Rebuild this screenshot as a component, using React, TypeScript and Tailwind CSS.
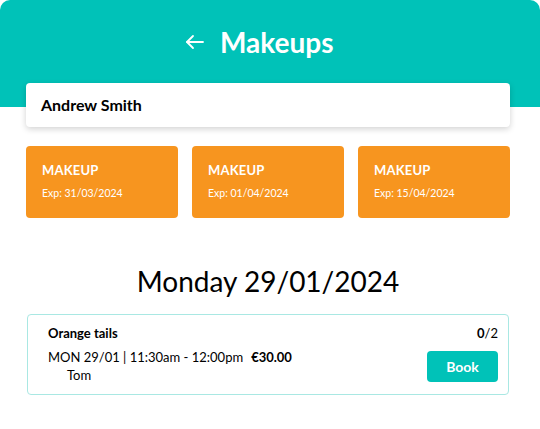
import React from "react";

const font = { fontFamily: "Lato, 'Noto Sans', sans-serif" };

function Voucher({ exp }: { exp: string }) {
  return (
    <div className="h-[72px] rounded-[4px] bg-[#f7951f] pl-[16px] pt-[15px] text-white">
      <div className="text-[13px] font-bold leading-[18px] tracking-[0.2px]">MAKEUP</div>
      <div className="mt-[7px] text-[10.5px] leading-[14px]">Exp: {exp}</div>
    </div>
  );
}

export default function App() {
  return (
    <div className="w-[540px] h-[429px] bg-white text-black" style={font}>
      <div className="h-[107px] rounded-t-[10px] bg-[#00c2b8] pt-[26px] pl-[185px]">
        <div className="flex items-center gap-[16px] text-white">
          <svg width="19" height="16" viewBox="0 0 19 16" fill="none" stroke="white" strokeWidth="1.8" strokeLinecap="round" strokeLinejoin="round">
            <path d="M18 8H2" />
            <path d="M8 2L2 8l6 6" />
          </svg>
          <span className="text-[28px] font-bold leading-[32px]">Makeups</span>
        </div>
      </div>
      <div className="ml-[26px] mr-[30px] -mt-[24px] flex h-[44px] items-center rounded-[4px] bg-white px-[15px] shadow-[0_2px_6px_rgba(0,0,0,0.18)]">
        <span className="text-[16px] font-bold">Andrew Smith</span>
      </div>
      <div className="ml-[26px] mr-[30px] mt-[19px] grid grid-cols-3 gap-[14px]">
        <Voucher exp="31/03/2024" />
        <Voucher exp="01/04/2024" />
        <Voucher exp="15/04/2024" />
      </div>
      <div className="mr-[4px] mt-[46px] text-center text-[28px] leading-[34px]">Monday 29/01/2024</div>
      <div className="ml-[27px] mr-[31px] mt-[16px] rounded-[4px] border border-[#a9e8e3] pl-[20px] pr-[10px] pt-[9px] pb-[10px]">
        <div className="flex items-center justify-between text-[13px] leading-[18px]">
          <span className="font-bold">Orange tails</span>
          <span><b>0</b>/2</span>
        </div>
        <div className="mt-[6px] flex items-center justify-between">
          <div className="text-[13px] leading-[18px]">
            <div>
              MON 29/01 | 11:30am - 12:00pm<span className="ml-[8px] font-bold">€30.00</span>
            </div>
            <div className="pl-[19px]">Tom</div>
          </div>
          <button className="h-[31px] w-[71px] rounded-[4px] bg-[#00c2b8] text-[14px] font-bold text-white">Book</button>
        </div>
      </div>
    </div>
  );
}
